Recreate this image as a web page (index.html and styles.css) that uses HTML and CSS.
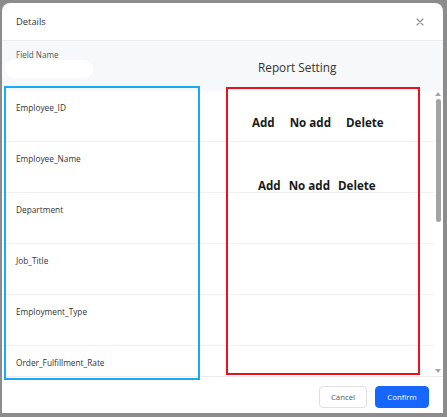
FILE: index.html
```html
<!DOCTYPE html>
<html>
<head>
<meta charset="utf-8">
<link rel="stylesheet" href="styles.css">
</head>
<body>
<div class="modal">
  <header class="hd">
    <span class="title">Details</span>
    <span class="close">
      <svg width="8" height="8" viewBox="0 0 8 8"><path d="M1 1L7 7M7 1L1 7" stroke="#8a8a8a" stroke-width="1.1" stroke-linecap="round"/></svg>
    </span>
  </header>
  <div class="tbl">
    <div class="thead"><span>Field Name</span></div>
    <div class="tbody">
      <div class="rows">
        <div class="row">Employee_ID</div>
        <div class="row">Employee_Name</div>
        <div class="row">Department</div>
        <div class="row">Job_Title</div>
        <div class="row">Employment_Type</div>
        <div class="row">Order_Fulfillment_Rate</div>
      </div>
      <div class="sb">
        <span class="up"></span>
        <span class="thumb"></span>
        <span class="grow"></span>
        <span class="dn"></span>
      </div>
    </div>
  </div>
  <footer class="ft">
    <button class="btn cancel">Cancel</button>
    <button class="btn confirm">Confirm</button>
  </footer>

  <div class="blob"></div>
  <div class="rs">Report Setting</div>
  <div class="box blue"></div>
  <div class="box red"></div>
  <div class="opts o1"><span>Add</span><span>No add</span><span>Delete</span></div>
  <div class="opts o2"><span>Add</span><span>No add</span><span>Delete</span></div>
</div>
</body>
</html>
```
FILE: styles.css
```css
* { box-sizing: border-box; }
html, body { margin: 0; padding: 0; }
body {
  width: 447px;
  height: 417px;
  background: #8c8c8c;
  font-family: "Open Sans", "Noto Sans", sans-serif;
  overflow: hidden;
}
.modal {
  position: relative;
  margin: 3px 4px 0 2px;
  width: 441px;
  height: 410px;
  background: #fff;
  border-radius: 8px 8px 0 0;
  display: flex;
  flex-direction: column;
  overflow: hidden;
}
.hd {
  height: 38px;
  flex: none;
  display: flex;
  align-items: center;
  justify-content: space-between;
  padding: 0 19px 0 14px;
  border-bottom: 1px solid #ececec;
}
.title { font-size: 9.4px; color: #333; }
.close { display: flex; width: 8px; height: 8px; margin-top: 1px; }
.tbl { flex: none; display: flex; flex-direction: column; }
.thead {
  height: 50px;
  background: #f7f8fa;
  padding: 8px 14px 0;
  font-size: 8.1px;
  color: #555;
}
.tbody {
  height: 286px;
  display: flex;
  border-bottom: 1px solid #ececec;
}
.rows { flex: 1; overflow: hidden; }
.row {
  height: 51px;
  border-bottom: 1px solid #f0f0f0;
  padding: 11px 14px 0;
  font-size: 8.3px;
  color: #333;
}
.sb {
  width: 9px;
  flex: none;
  display: flex;
  flex-direction: column;
  align-items: center;
  padding: 1px 1px 3px 0;
}
.up, .dn { width: 0; height: 0; border-left: 3px solid transparent; border-right: 3px solid transparent; }
.up { border-bottom: 4px solid #a5a5a5; margin-bottom: 3px; }
.dn { border-top: 4px solid #a5a5a5; }
.thumb { width: 5px; height: 123px; background: #a3a3a3; border-radius: 3px; }
.grow { flex: 1; }
.ft {
  flex: 1;
  display: flex;
  justify-content: flex-end;
  align-items: flex-start;
  gap: 8px;
  padding: 9px 14px 0 0;
}
.btn {
  height: 22px;
  border-radius: 4px;
  font-family: inherit;
  font-size: 7.8px;
  padding: 0;
  cursor: pointer;
}
.cancel { width: 48px; background: #fff; border: 1px solid #e0e0e0; color: #555; }
.confirm { width: 54px; background: #1766ff; border: 1px solid #1766ff; color: #fff; }

.blob {
  position: absolute;
  left: 3px; top: 57px;
  width: 88px; height: 18px;
  border-radius: 9px;
  background: #fff;
}
.rs {
  position: absolute;
  left: 256px; top: 56px;
  font-size: 11.8px;
  color: #333;
}
.box { position: absolute; border: 2px solid; }
.blue { left: 2px; top: 83px; width: 196px; height: 294px; border-color: #19aaef; }
.red { left: 224px; top: 84px; width: 194px; height: 288px; border-color: #e8121c; }
.opts {
  position: absolute;
  display: flex;
  font-weight: 700;
  font-size: 11.6px;
  color: #1a1a1a;
}
.o1 { left: 250px; top: 112px; gap: 15px; }
.o2 { left: 256px; top: 175px; gap: 8px; }
```
